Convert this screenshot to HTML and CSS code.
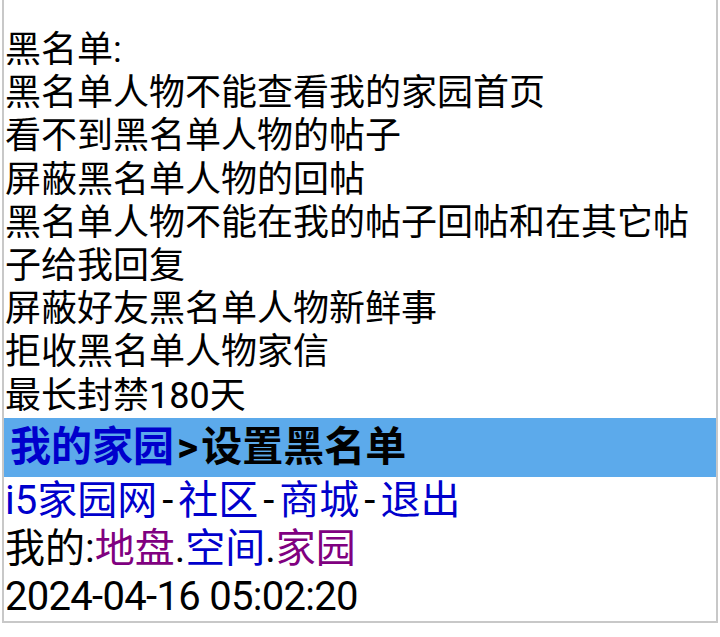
FILE: index.html
```html
<!DOCTYPE html>
<html lang="zh-CN">
<head>
<meta charset="utf-8">
<title>设置黑名单</title>
<link rel="stylesheet" href="styles.css">
</head>
<body>
<div class="page">
  <div class="intro">
    黑名单:<br>
    黑名单人物不能查看我的家园首页<br>
    看不到黑名单人物的帖子<br>
    屏蔽黑名单人物的回帖<br>
    黑名单人物不能在我的帖子回帖和在其它帖子给我回复<br>
    屏蔽好友黑名单人物新鲜事<br>
    拒收黑名单人物家信<br>
    最长封禁180天
  </div>
  <div class="bar"><a class="link" href="#">我的家园</a><span class="gt">&gt;</span>设置黑名单</div>
  <div class="line"><a class="link" href="#">i5家园网</a><span class="sep">-</span><a class="link" href="#">社区</a><span class="sep">-</span><a class="link" href="#">商城</a><span class="sep">-</span><a class="link" href="#">退出</a></div>
  <div class="line">我的:<a class="visited" href="#">地盘</a>.<a class="link" href="#">空间</a>.<a class="visited" href="#">家园</a></div>
  <div class="line date">2024-04-16 05:02:20</div>
</div>
</body>
</html>
```
FILE: styles.css
```css
html, body {
  margin: 0;
  padding: 0;
  background: #fff;
}
body {
  font-family: Roboto, "Noto Sans CJK SC", sans-serif;
  color: #000;
}
.page {
  margin: 0 2px;
  border: 2px solid #c8c8c8;
  border-top: none;
  padding-top: 29px;
  font-size: 40px;
  line-height: 48px;
}
.intro {
  font-size: 36px;
  line-height: 43.2px;
  padding: 0 1px;
}
.bar {
  background: #5caaeb;
  font-weight: bold;
  font-size: 41px;
  padding: 5.5px 6px;
}
.gt {
  padding: 0 3px;
}
.line {
  padding: 0 1px;
}
.sep {
  padding: 0 5px;
}
.date {
  letter-spacing: -0.7px;
}
a {
  text-decoration: none;
}
.link {
  color: #0000cc;
}
.visited {
  color: #800080;
}
```
